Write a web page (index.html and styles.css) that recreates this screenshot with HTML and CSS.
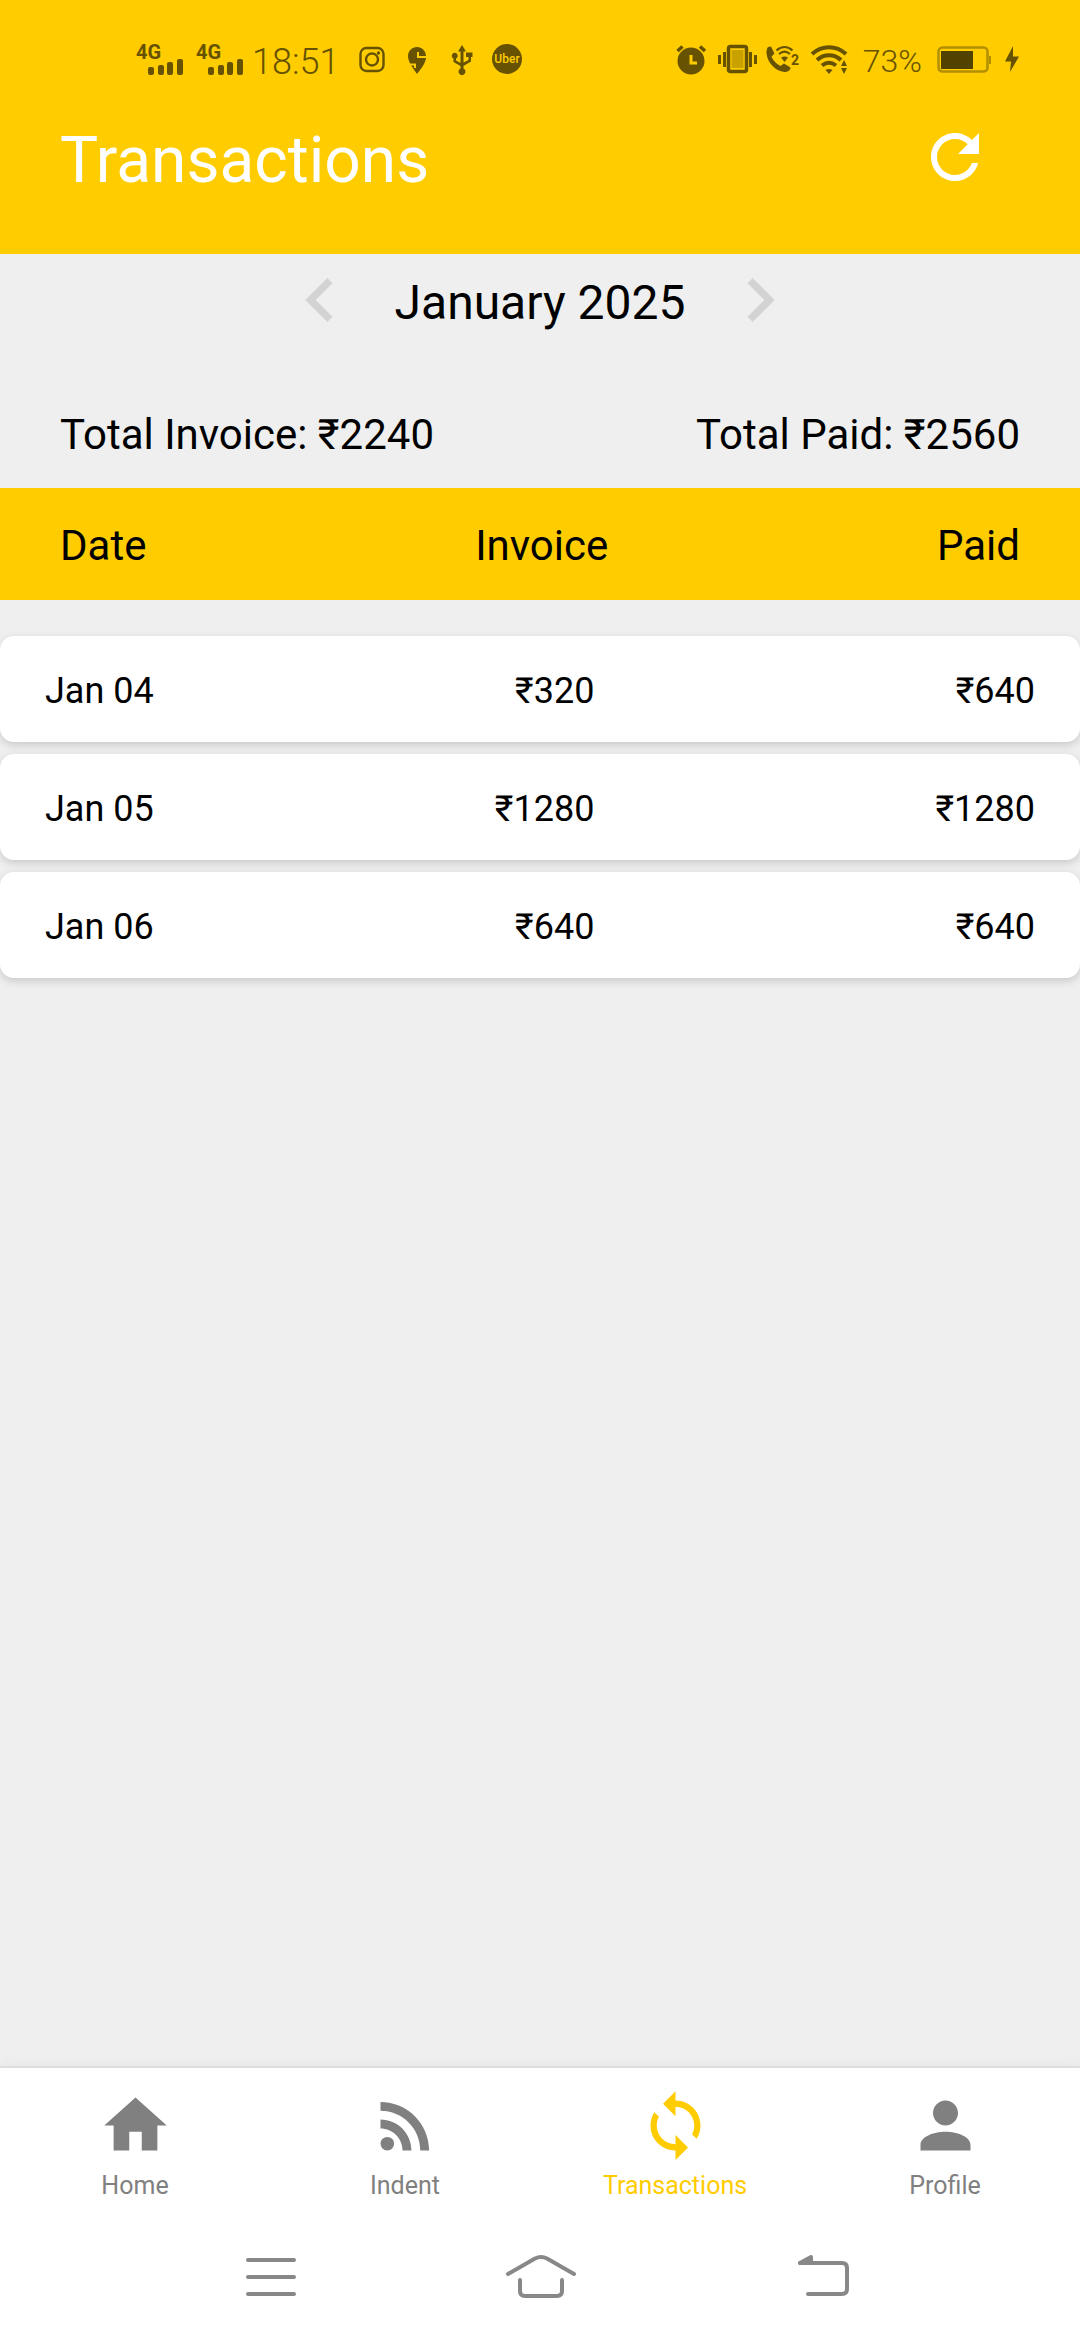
FILE: index.html
```html
<!DOCTYPE html>
<html lang="en">
<head>
<meta charset="utf-8">
<meta name="viewport" content="width=device-width, initial-scale=1">
<title>Transactions</title>
<link rel="stylesheet" href="styles.css">
</head>
<body>
<div class="app">
  <header class="header">
    <div class="status">
      <div class="signals">
        <svg class="signal" viewBox="0 0 48 32"><text class="net" x="0" y="15">4G</text><rect x="12" y="23" width="6" height="8" rx="2"/><rect x="22" y="21" width="6" height="10" rx="2"/><rect x="31" y="18" width="6" height="13" rx="2"/><rect x="41" y="15" width="6" height="16" rx="2"/></svg>
        <svg class="signal" viewBox="0 0 48 32"><text class="net" x="0" y="15">4G</text><rect x="12" y="23" width="6" height="8" rx="2"/><rect x="22" y="21" width="6" height="10" rx="2"/><rect x="31" y="18" width="6" height="13" rx="2"/><rect x="41" y="15" width="6" height="16" rx="2"/></svg>
      </div>
      <span class="clock">18:51</span>
      <div class="notices">
        <svg class="notice" viewBox="0 0 32 32"><g fill="none" stroke="currentColor" stroke-width="2.4"><rect x="4.500" y="4" width="23" height="23" rx="6"/><circle cx="16" cy="15.500" r="6"/></g><circle cx="22.500" cy="9" r="1.700"/></svg>
        <svg class="notice" viewBox="0 0 32 32"><path d="M16 3C11 3 7 7 7 12c0 6 5 12 9 18 4-5 7.500-9.500 9-15V12c0-5-4-9-9-9z"/><path class="slit" d="M17 8v5h10M6 20.500h8V24"/></svg>
        <svg class="notice" viewBox="0 0 32 32"><path d="M16 1l4 6.500h-2.500v11l5-2.500V13H20V8.500h6.500V13H25v4.500l-7.500 4.500v2.500a3.500 3.500 0 1 1-3 0V22L7.500 18v-3.500a3 3 0 1 1 2.500 0v2l4.500 2.500V7.500H12z"/></svg>
        <svg class="notice" viewBox="0 0 32 32"><circle cx="16" cy="15" r="15"/><text class="uber" x="16" y="19" text-anchor="middle">Uber</text></svg>
      </div>
      <div class="system">
        <svg class="sys" viewBox="0 0 40 32"><circle cx="20" cy="17" r="13.500"/><path d="M6.500 7l5-4.500M34 7l-5-4.500" stroke="currentColor" stroke-width="3.500"/><path class="cut" d="M20 11v8h6"/></svg>
        <svg class="sys" viewBox="0 0 40 32"><rect x="11.500" y="2.500" width="18" height="25" rx="2" fill="none" stroke="currentColor" stroke-width="3.500"/><rect x="14.500" y="6" width="12" height="18" opacity=".35"/><path d="M7.500 8v15M2.500 11v9M33.500 8v15M38.500 11v9" stroke="currentColor" stroke-width="3"/></svg>
        <svg class="sys" viewBox="0 0 40 32"><path d="M5 3l3-.5 3.500 7-3 3c1.500 4 5 7.500 9 9.500l3.500-2.500 6.500 4c0 3-3 4.500-6 4.500C12 27 4 18 3.500 9 3.500 6 4 4 5 3z"/><g fill="none" stroke="currentColor" stroke-width="2.200"><path d="M13.500 6.500c5-4.500 11-4.500 16 0M16 10c3.500-3 7.500-3 11 0"/></g><path d="M18 13.500c2.500-1.500 5-1.500 7 0L21.500 18z"/><text class="sim" x="28" y="21">2</text></svg>
        <svg class="sys" viewBox="0 0 40 32"><g fill="none" stroke="currentColor" stroke-width="4"><path d="M3 10C13 1 27 1 37 10M8 16c7-6.500 17-6.500 24 0M13 21.500c4.500-3.500 9.500-3.500 14 0"/></g><path d="M16.500 26c2-1.500 5-1.500 7 0L20 30zM32 22l3-6 3 6zM32 24h6l-3 6z"/></svg>
      </div>
      <span class="level">73%</span>
      <svg class="battery" viewBox="0 0 56 32"><rect x="1.500" y="3.500" width="49" height="24" rx="4" fill="none" stroke="currentColor" stroke-width="2.500" opacity=".5"/><rect class="charge" x="4" y="7" width="32" height="18"/><rect x="52" y="12" width="2" height="8" opacity=".5"/></svg>
      <svg class="bolt" viewBox="0 0 16 32"><path d="M9 2L1 17.500h6L6 28l9-15.500H9z"/></svg>
    </div>
    <div class="titlebar">
      <h1 class="title">Transactions</h1>
      <button class="refresh" type="button" aria-label="Refresh"><svg viewBox="0 0 24 24"><path d="M17.650 6.350C16.200 4.900 14.210 4 12 4c-4.420 0-7.990 3.580-7.990 8s3.570 8 7.990 8c3.730 0 6.840-2.550 7.730-6h-2.080c-.82 2.330-3.040 4-5.650 4-3.310 0-6-2.690-6-6s2.690-6 6-6c1.660 0 3.140.69 4.220 1.780L13 11h7V4l-2.350 2.350z"/></svg></button>
    </div>
  </header>

  <main class="main">
    <div class="month">
      <button class="step" type="button" aria-label="Previous month"><svg viewBox="0 0 24 24"><path d="M15.410 7.410L14 6l-6 6 6 6 1.410-1.410L10.830 12z"/></svg></button>
      <h2 class="month-name">January 2025</h2>
      <button class="step" type="button" aria-label="Next month"><svg viewBox="0 0 24 24"><path d="M10 6L8.590 7.410 13.170 12l-4.580 4.590L10 18l6-6z"/></svg></button>
    </div>
    <div class="totals"><span>Total Invoice: ₹2240</span><span>Total Paid: ₹2560</span></div>
    <table class="ledger">
      <thead><tr class="ledger-head"><th>Date</th><th>Invoice</th><th>Paid</th></tr></thead>
      <tbody class="ledger-body">
        <tr class="entry"><td>Jan 04</td><td>₹320</td><td>₹640</td></tr>
        <tr class="entry"><td>Jan 05</td><td>₹1280</td><td>₹1280</td></tr>
        <tr class="entry"><td>Jan 06</td><td>₹640</td><td>₹640</td></tr>
      </tbody>
    </table>
  </main>

  <nav class="tabs">
    <a class="tab" href="#home"><svg viewBox="0 0 24 24"><path d="M10 20v-6h4v6h5v-8h3L12 3 2 12h3v8z"/></svg>Home</a>
    <a class="tab" href="#indent"><svg viewBox="0 0 24 24"><circle cx="6.180" cy="17.820" r="2.180"/><path d="M4 4.440v2.830c7.030 0 12.730 5.700 12.730 12.730h2.830c0-8.590-6.970-15.560-15.560-15.560zm0 5.660v2.830c3.900 0 7.070 3.170 7.070 7.070h2.830c0-5.470-4.430-9.900-9.900-9.900z"/></svg>Indent</a>
    <a class="tab tab-active" href="#transactions" aria-current="page"><svg viewBox="0 0 24 24"><path d="M12 4V1L8 5l4 4V6c3.310 0 6 2.690 6 6 0 1.010-.25 1.970-.7 2.800l1.460 1.460C19.540 15.030 20 13.570 20 12c0-4.420-3.580-8-8-8zm0 14c-3.310 0-6-2.690-6-6 0-1.010.25-1.970.7-2.800L5.240 7.740C4.460 8.970 4 10.430 4 12c0 4.420 3.580 8 8 8v3l4-4-4-4v3z"/></svg>Transactions</a>
    <a class="tab" href="#profile"><svg viewBox="0 0 24 24"><path d="M12 12c2.210 0 4-1.790 4-4s-1.790-4-4-4-4 1.790-4 4 1.790 4 4 4zm0 2c-4 0-8 1.700-8 4.200V20h16v-1.800c0-2.500-4-4.200-8-4.200z"/></svg>Profile</a>
  </nav>
  <div class="keys">
    <button class="key" type="button" aria-label="Recent apps"><svg viewBox="0 0 80 50"><path d="M18 8h46M18 25h46M18 42h46"/></svg></button>
    <button class="key" type="button" aria-label="Home screen"><svg viewBox="0 0 80 50"><path d="M8 22L35 6.500q6-3 12 0L74 22M20 28v11q0 5 5 5h32q5 0 5-5V28"/></svg></button>
    <button class="key" type="button" aria-label="Back"><svg viewBox="0 0 80 50"><path d="M30 11h42q5 0 5 5v21q0 5-5 5H38"/><path class="tip" d="M30 11l11-6v6z"/></svg></button>
  </div>
</div>
</body>
</html>
```
FILE: styles.css
```css
* {
  box-sizing: border-box;
}

body {
  margin: 0;
  font-family: Roboto, "Noto Sans", sans-serif;
  color: #000;
  background: #efefef;
}

button {
  padding: 0;
  border: 0;
  background: none;
  color: inherit;
}

svg {
  display: block;
  fill: currentColor;
  overflow: visible;
}

.app {
  min-height: 100vh;
  display: flex;
  flex-direction: column;
}

/* Header */
.header {
  padding: 40px 60px 53px;
  background: #fc0;
}

.status {
  display: flex;
  align-items: center;
  height: 40px;
  padding-left: 76px;
  color: #665200;
}

.signals {
  display: flex;
  gap: 12px;
  margin-right: 8px;
}

.signal {
  width: 48px;
  height: 32px;
}

.net {
  font-size: 20px;
  font-weight: 700;
}

.clock {
  width: 104px;
  padding-top: 4px;
  font-size: 36px;
  font-weight: 300;
  line-height: 40px;
}

.notices {
  display: flex;
  gap: 13px;
}

.notice {
  width: 32px;
  height: 32px;
}

.uber {
  font-size: 12px;
  font-weight: 500;
  fill: #fc0;
}

.system {
  display: flex;
  gap: 6px;
  margin-left: auto;
  margin-right: 14px;
}

.sys {
  width: 40px;
  height: 32px;
}

.cut,
.slit {
  fill: none;
  stroke: #fc0;
  stroke-width: 3px;
}

.slit {
  stroke-width: 2px;
}

.sim {
  font-size: 14px;
  font-weight: 700;
}

.level {
  padding-top: 2px;
  font-size: 32px;
  font-weight: 300;
  line-height: 40px;
}

.battery {
  width: 56px;
  height: 32px;
  margin: 0 11px 0 15px;
}

.charge {
  fill: #524200;
}

.bolt {
  width: 16px;
  height: 32px;
}

.titlebar {
  display: flex;
  justify-content: space-between;
  align-items: flex-start;
  margin-top: 41px;
  padding-right: 29px;
  color: #fff;
}

.title {
  margin: 0;
  font-size: 64px;
  font-weight: 400;
  line-height: 80px;
}

.refresh,
.refresh svg {
  width: 72px;
  height: 72px;
}

/* Month switcher and totals */
.main {
  flex: 1;
}

.month {
  display: flex;
  justify-content: center;
  align-items: flex-end;
  gap: 31px;
  padding-top: 2px;
}

.month-name {
  margin: 0;
  font-size: 48px;
  font-weight: 400;
  line-height: 82px;
}

.step {
  color: #d3d3d3;
}

.step,
.step svg {
  width: 88px;
  height: 88px;
}

.totals {
  display: flex;
  justify-content: space-between;
  padding: 67px 60px 29px;
  font-size: 42px;
  line-height: 48px;
}

/* Ledger */
.ledger,
.ledger thead {
  display: block;
}

.ledger th,
.ledger td {
  padding: 0;
}

.ledger-head {
  display: flex;
  justify-content: space-between;
  padding: 34px 60px 30px;
  background: #fc0;
  font-size: 42px;
  line-height: 48px;
}

.ledger-head th {
  font-weight: 400;
}

.ledger-body {
  display: flex;
  flex-direction: column;
  gap: 12px;
  margin: 36px 0;
}

.entry {
  display: flex;
  justify-content: space-between;
  padding: 33px 45px 29px;
  border-radius: 14px;
  background: #fff;
  box-shadow: 0 3px 8px rgba(0, 0, 0, 0.16);
  font-size: 36px;
  line-height: 44px;
}

/* Bottom tabs */
.tabs {
  display: flex;
  border-top: 2px solid #dedede;
  background: #fff;
  box-shadow: 0 -2px 12px rgba(0, 0, 0, 0.04);
}

.tab {
  flex: 1;
  display: flex;
  flex-direction: column;
  align-items: center;
  gap: 7px;
  padding: 20px 0 32px;
  color: gray;
  font-size: 25px;
  line-height: 32px;
  text-decoration: none;
}

.tab svg {
  width: 75px;
  height: 75px;
}

.tab-active {
  color: #fc0;
}

/* System keys */
.keys {
  display: flex;
  justify-content: center;
  gap: 190px;
  padding: 18px 0 38px;
  background: #fff;
  color: #888;
}

.key,
.key svg {
  width: 80px;
  height: 50px;
}

.key svg {
  fill: none;
  stroke: currentColor;
  stroke-width: 4px;
  stroke-linecap: round;
  stroke-linejoin: round;
}

.key .tip {
  fill: currentColor;
}
```
